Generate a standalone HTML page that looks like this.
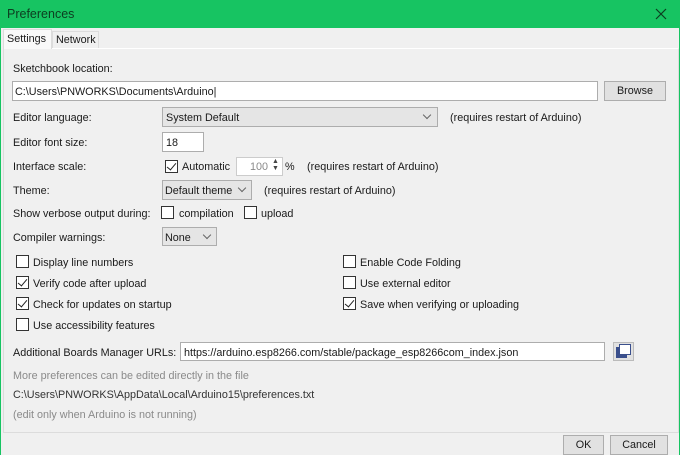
<!DOCTYPE html>
<html><head><meta charset="utf-8"><style>
*{box-sizing:border-box;margin:0;padding:0}
body{width:680px;height:455px;background:#f0f0f0;font-family:"Liberation Sans",sans-serif;font-size:10.8px;color:#1a1a1a;position:relative;overflow:hidden}
.a{position:absolute;white-space:nowrap;line-height:14px;margin-top:1px}
.box{position:absolute;background:#fff;border:1px solid #adadad}
.dd{position:absolute;background:#e5e5e5;border:1px solid #adadad}
.btn{position:absolute;background:#e1e1e1;border:1px solid #adadad;text-align:center;line-height:18px}
.cb{position:absolute;width:13px;height:13px;border:1px solid #333;background:#fff}
.cb.c::after{content:"";position:absolute;left:3px;top:0px;width:4px;height:8px;border:solid #222;border-width:0 1.3px 1.3px 0;transform:rotate(40deg)}
.chev{position:absolute;width:6px;height:6px;border:solid #666;border-width:0 1px 1px 0;transform:rotate(45deg)}
.g{color:#8a8a8a}
</style></head><body>
<div style="position:absolute;left:0;top:0;width:680px;height:28px;background:#17c462"></div>
<div style="position:absolute;left:0;top:0;width:1px;height:455px;background:#17c462"></div>
<div style="position:absolute;left:679px;top:0;width:1px;height:455px;background:#17c462"></div>
<div class="a" style="left:7px;top:6px;font-size:12.5px;color:#0d3d20">Preferences</div>
<svg style="position:absolute;left:655px;top:8px" width="12" height="12"><path d="M1 1L11 11M11 1L1 11" stroke="#0d3d20" stroke-width="1.2"/></svg>
<div style="position:absolute;left:3px;top:48px;width:676px;height:385px;border:1px solid #dcdcdc;border-top-color:#fff;background:#f0f0f0"></div>
<div style="position:absolute;left:3px;top:29px;width:49px;height:20px;background:#f9f9f9;border:1px solid #dcdcdc;border-bottom:none"></div>
<div style="position:absolute;left:52px;top:31px;width:47px;height:17px;background:#f0f0f0;border:1px solid #dcdcdc;border-bottom:none"></div>
<div class="a" style="left:7px;top:31px">Settings</div>
<div class="a" style="left:56px;top:32px">Network</div>

<div class="a" style="left:13px;top:61px">Sketchbook location:</div>
<div class="box" style="left:12px;top:81px;width:586px;height:20px"></div>
<div class="a" style="left:15px;top:84px">C:\Users\PNWORKS\Documents\Arduino|</div>
<div class="btn" style="left:604px;top:81px;width:62px;height:20px">Browse</div>

<div class="a" style="left:13px;top:110px">Editor language:</div>
<div class="dd" style="left:162px;top:107px;width:276px;height:20px"></div>
<div class="a" style="left:166px;top:110px">System Default</div>
<div class="chev" style="left:424px;top:112px"></div>
<div class="a" style="left:450px;top:110px">(requires restart of Arduino)</div>

<div class="a" style="left:13px;top:135px">Editor font size:</div>
<div class="box" style="left:162px;top:132px;width:42px;height:20px"></div>
<div class="a" style="left:166px;top:135px">18</div>

<div class="a" style="left:13px;top:159px">Interface scale:</div>
<div class="cb c" style="left:165px;top:160px"></div>
<div class="a" style="left:182px;top:159px">Automatic</div>
<div class="box" style="left:236px;top:157px;width:47px;height:19px;border-color:#ccc"></div>
<div class="a g" style="left:250px;top:159px">100</div>
<div class="a" style="left:272px;top:157px;font-size:7px;line-height:7px;color:#444">▲<br>▼</div>
<div class="a" style="left:285px;top:159px">%</div>
<div class="a" style="left:307px;top:159px">(requires restart of Arduino)</div>

<div class="a" style="left:13px;top:183px">Theme:</div>
<div class="dd" style="left:162px;top:180px;width:90px;height:20px"></div>
<div class="a" style="left:165px;top:183px">Default theme</div>
<div class="chev" style="left:239px;top:185px"></div>
<div class="a" style="left:264px;top:183px">(requires restart of Arduino)</div>

<div class="a" style="left:13px;top:206px">Show verbose output during:</div>
<div class="cb" style="left:161px;top:206px"></div>
<div class="a" style="left:179px;top:206px">compilation</div>
<div class="cb" style="left:244px;top:206px"></div>
<div class="a" style="left:261px;top:206px">upload</div>

<div class="a" style="left:13px;top:230px">Compiler warnings:</div>
<div class="dd" style="left:162px;top:227px;width:55px;height:19px"></div>
<div class="a" style="left:165px;top:230px">None</div>
<div class="chev" style="left:204px;top:232px"></div>

<div class="cb" style="left:16px;top:255px"></div><div class="a" style="left:33px;top:255px">Display line numbers</div>
<div class="cb c" style="left:16px;top:276px"></div><div class="a" style="left:33px;top:276px">Verify code after upload</div>
<div class="cb c" style="left:16px;top:297px"></div><div class="a" style="left:33px;top:297px">Check for updates on startup</div>
<div class="cb" style="left:16px;top:318px"></div><div class="a" style="left:33px;top:318px">Use accessibility features</div>
<div class="cb" style="left:343px;top:255px"></div><div class="a" style="left:360px;top:255px">Enable Code Folding</div>
<div class="cb" style="left:343px;top:276px"></div><div class="a" style="left:360px;top:276px">Use external editor</div>
<div class="cb c" style="left:343px;top:297px"></div><div class="a" style="left:360px;top:297px">Save when verifying or uploading</div>

<div class="a" style="left:13px;top:345px">Additional Boards Manager URLs:</div>
<div class="box" style="left:180px;top:342px;width:425px;height:19px"></div>
<div class="a" style="left:184px;top:345px">https://arduino.esp8266.com/stable/package_esp8266com_index.json</div>
<div style="position:absolute;left:613px;top:342px;width:21px;height:19px;background:#e1e1e1;border:1px solid #bbb"></div>
<div style="position:absolute;left:616px;top:347px;width:11px;height:11px;background:#3a4f8c"></div>
<div style="position:absolute;left:619px;top:344px;width:12px;height:11px;background:#fff;border:1.5px solid #3a4f8c"></div>

<div class="a g" style="left:13px;top:368px">More preferences can be edited directly in the file</div>
<div class="a" style="left:13px;top:387px;color:#333">C:\Users\PNWORKS\AppData\Local\Arduino15\preferences.txt</div>
<div class="a g" style="left:13px;top:407px">(edit only when Arduino is not running)</div>

<div class="btn" style="left:563px;top:435px;width:41px;height:20px">OK</div>
<div class="btn" style="left:610px;top:435px;width:58px;height:20px">Cancel</div>
</body></html>
